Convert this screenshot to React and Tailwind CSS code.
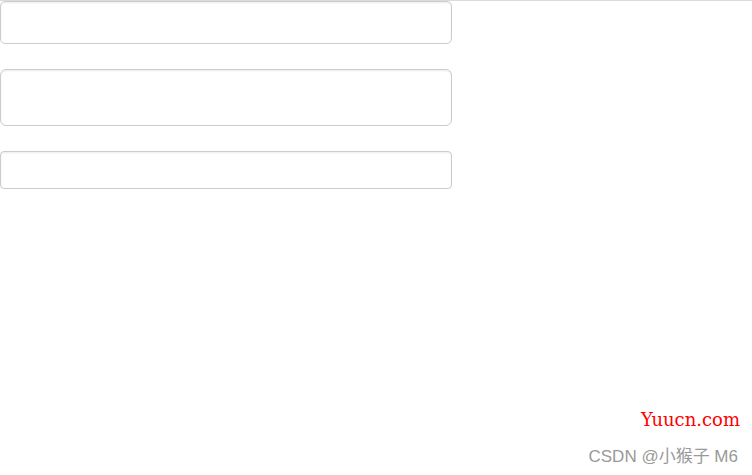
export default function App() {
  return (
    <div className="relative w-[752px] h-[475px] bg-white border-t border-[#dcdcdc] overflow-hidden">
      <div className="flex flex-col gap-[25px] w-[452px]">
        <div className="h-[43px] rounded-[5px] border border-[#cccccc] shadow-[inset_0_1px_2px_rgba(0,0,0,0.08)]" />
        <div className="h-[57px] rounded-[6px] border border-[#cccccc] shadow-[inset_0_1px_2px_rgba(0,0,0,0.08)]" />
        <div className="h-[38px] rounded-[4px] border border-[#cccccc] shadow-[inset_0_1px_2px_rgba(0,0,0,0.08)]" />
      </div>
      <div className="absolute right-[12px] top-[407px] text-[18px] leading-[24px] text-[#ff0000] font-['DejaVu_Serif',serif]">
        Yuucn.com
      </div>
      <div className="absolute right-[14px] top-[444px] text-[17px] leading-[24px] text-[#999999] font-['Liberation_Sans','Noto_Sans_CJK_SC',sans-serif]">
        CSDN @小猴子 M6
      </div>
    </div>
  );
}
